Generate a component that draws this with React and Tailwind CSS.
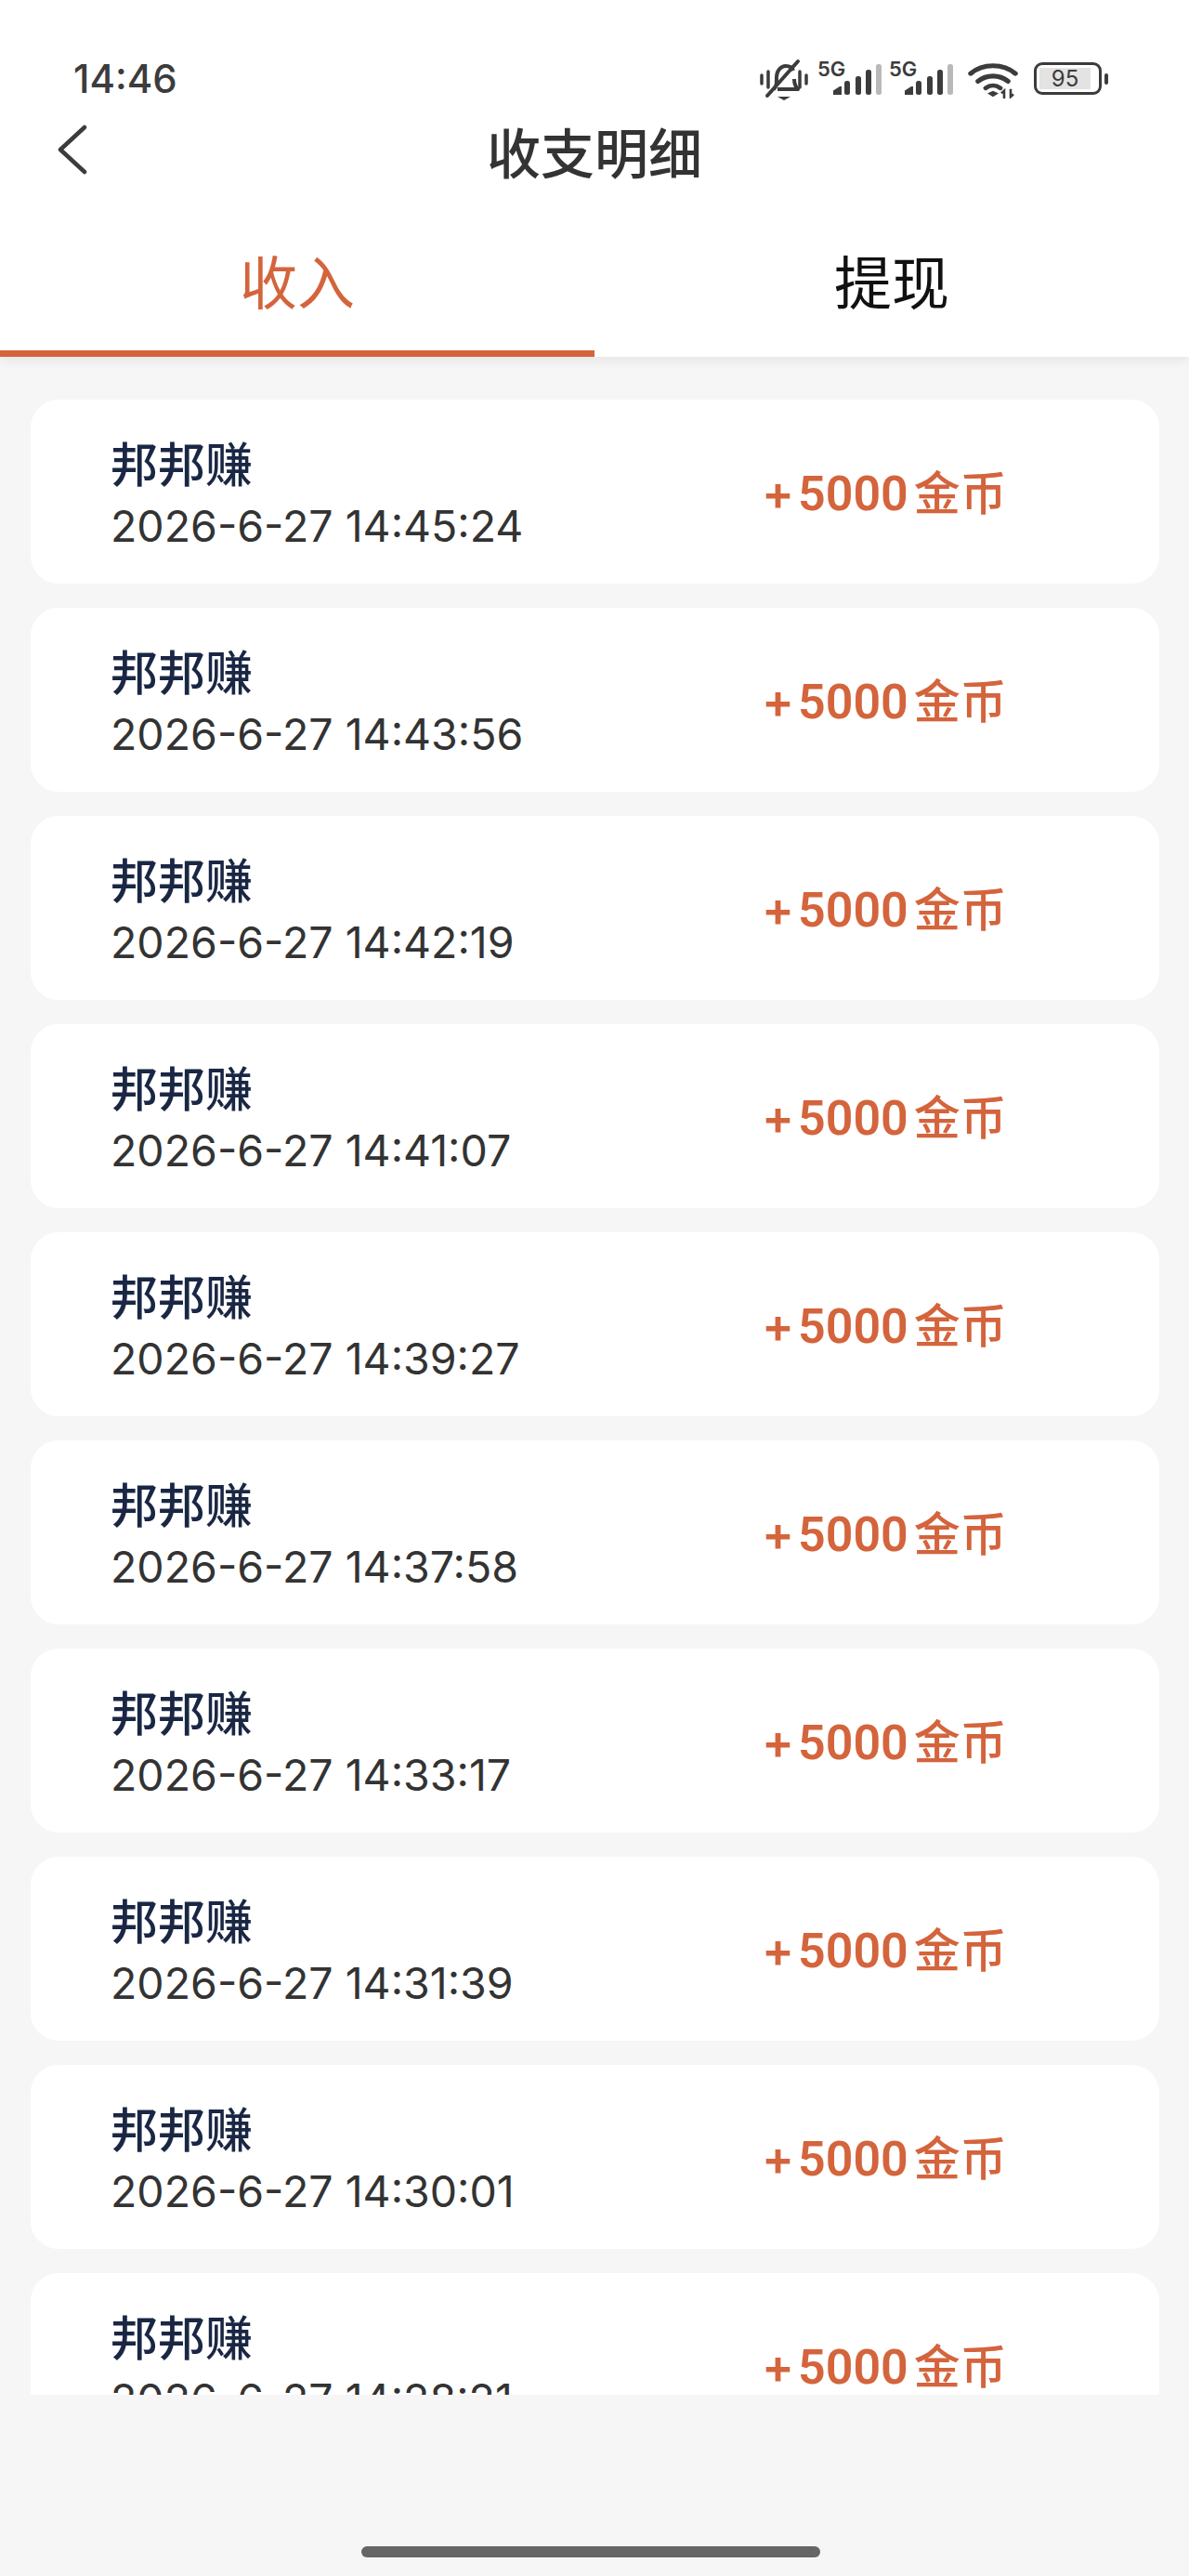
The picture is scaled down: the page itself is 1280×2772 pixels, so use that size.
import React from "react";

const times = ["14:45:24","14:43:56","14:42:19","14:41:07","14:39:27","14:37:58","14:33:17","14:31:39","14:30:01","14:28:21"];
const inter = { fontFamily: 'Inter, "Noto Sans CJK SC", sans-serif' };
const roboto = { fontFamily: 'Roboto, "Noto Sans CJK SC", sans-serif' };

function Signal() {
  return (
    <svg width="70" height="46" viewBox="0 -6 70 46" className="block">
      <text x="0" y="16" fontSize="22" fontWeight="600" fill="#3c3c3c" fontFamily="Inter, sans-serif">5G</text>
      <path d="M17 36v-4.5l7-4.5h2v9z" fill="#3c3c3c" />
      <rect x="29" y="21" width="6" height="15" rx="2.5" fill="#3c3c3c" />
      <rect x="41" y="16" width="6" height="20" rx="2.5" fill="#3c3c3c" />
      <rect x="52" y="9" width="6" height="27" rx="2.5" fill="#3c3c3c" />
      <rect x="63" y="3" width="6" height="33" rx="2.5" fill="#b9b9b9" />
    </svg>
  );
}

function StatusIcons() {
  return (
    <div className="flex items-start mt-[3px]">
      <svg width="52" height="46" viewBox="0 0 52 46" fill="none" stroke="#3c3c3c" className="block">
        <path d="M2 18v9M50 18v9" strokeWidth="3.5" strokeLinecap="round" />
        <path d="M9 14v17M43 14v17" strokeWidth="3.5" strokeLinecap="round" />
        <path d="M15 33c3-3 3-6 3-13c0-6 4-12 10-12c4 0 7 2 8 5M37 22c0 5 1 8 4 11H19" strokeWidth="4" strokeLinejoin="round" />
        <path d="M41 3 L8 40" strokeWidth="4" strokeLinecap="round" />
        <path d="M19 41h14l-7 4z" fill="#3c3c3c" stroke="none" />
      </svg>
      <div className="ml-[10px] -mt-[3px]"><Signal /></div>
      <div className="ml-[7px] -mt-[3px]"><Signal /></div>
      <svg width="54" height="39" viewBox="0 0 54 42" preserveAspectRatio="none" fill="none" stroke="#3c3c3c" className="block ml-[15px] mt-[4px]">
        <path d="M3 13C16 1 38 1 51 13" strokeWidth="5.5" strokeLinecap="round" />
        <path d="M11 22C20 14 34 14 43 22" strokeWidth="5.5" strokeLinecap="round" />
        <path d="M19 30c5-4 11-4 16 0" strokeWidth="5" strokeLinecap="round" />
        <path d="M21 36l6-3 6 3-6 4z" fill="#3c3c3c" stroke="none" />
        <path d="M39 42v-9l-3 3M46 31v9l3-3" strokeWidth="2.6" />
      </svg>
      <div className="ml-[17px] mt-[4px] flex items-center">
        <div className="w-[73px] h-[35px] rounded-[9px] border-[3px] border-[#3c3c3c] p-[3px] flex">
          <div className="w-[55px] h-full bg-[#e3e3e3] flex items-center justify-center text-[24px] leading-none text-[#3c3c3c]" style={inter}>95</div>
        </div>
        <div className="ml-[3px] w-[4px] h-[12px] rounded-[2px] bg-[#3c3c3c]" />
      </div>
    </div>
  );
}

function Row({ time }) {
  return (
    <div className="shrink-0 h-[198px] mx-[33px] w-[1215px] bg-white rounded-[30px] flex items-center pl-[86px]">
      <div className="flex-1 pt-[7px]">
        <div className="text-[51px] leading-[66px] font-medium text-[#1a2744]" style={inter}>邦邦赚</div>
        <div className="text-[46.5px] leading-[64px] font-normal text-[#333333]" style={inter}>2026-6-27 {time}</div>
      </div>
      <div className="w-[428px] pt-[4px] flex items-baseline text-[#d4643c] font-semibold" style={roboto}>
        <span className="text-[52px] leading-[66px] mr-[4px]" style={inter}>+</span>
        <span className="text-[52px] leading-[66px]">5000</span>
        <span className="text-[50px] leading-[66px] font-medium ml-[6px]">金币</span>
      </div>
    </div>
  );
}

export default function App() {
  return (
    <div className="w-[1280px] h-[2772px] bg-[#f6f6f6] flex flex-col overflow-hidden" style={inter}>
      <header className="bg-white shrink-0 shadow-[0_4px_12px_rgba(0,0,0,0.07)] relative z-10">
        <div className="h-[128px] flex items-start justify-between pl-[79px] pr-[87px] pt-[60px]">
          <span className="text-[42px] leading-[50px] font-medium text-[#3c3c3c]">14:46</span>
          <StatusIcons />
        </div>
        <div className="h-[76px] relative flex items-center justify-center">
          <svg width="32" height="54" viewBox="0 0 32 54" fill="none" stroke="#3c3c3c" strokeWidth="4.5" strokeLinecap="round" strokeLinejoin="round" className="absolute left-[62px] top-[6px]">
            <path d="M29 3L3 27l26 24" />
          </svg>
          <span className="text-[58px] leading-[76px] font-medium text-[#333333]">收支明细</span>
        </div>
        <div className="flex h-[180px]">
          <div className="flex-1 flex items-center justify-center pt-[30px] text-[62px] text-[#d4643c] border-b-[7px] border-[#d4643c]">收入</div>
          <div className="flex-1 flex items-center justify-center pt-[30px] text-[62px] text-[#111111] border-b-[7px] border-transparent">提现</div>
        </div>
      </header>
      <main className="h-[2193px] shrink-0 overflow-hidden flex flex-col gap-[26px] pt-[46px]">
        {times.map((t) => <Row key={t} time={t} />)}
      </main>
      <div className="flex-1 flex pl-[389px] pt-[163px]">
        <div className="w-[494px] h-[12px] rounded-full bg-[#666666]" />
      </div>
    </div>
  );
}
